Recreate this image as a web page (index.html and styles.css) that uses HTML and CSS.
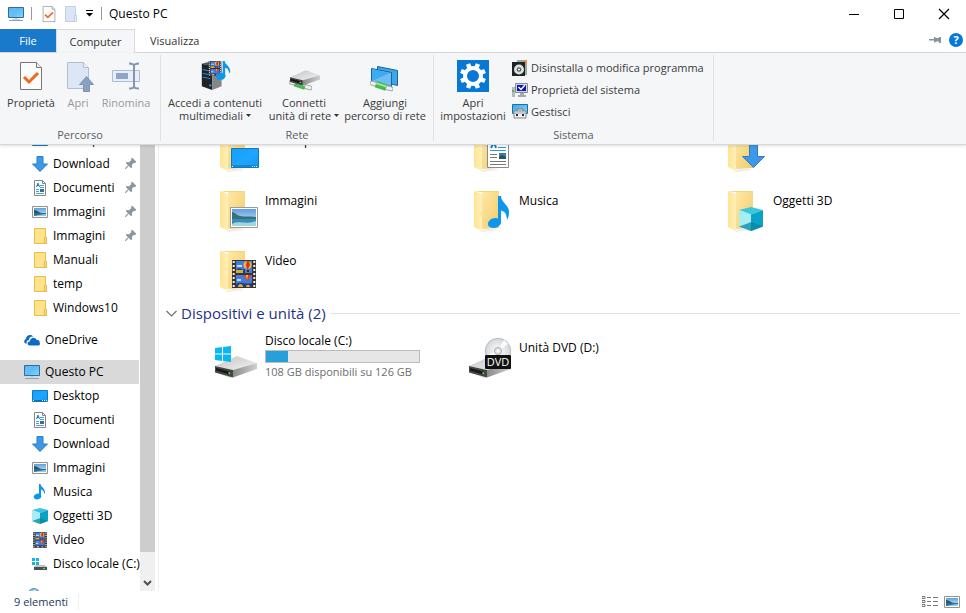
FILE: index.html
```html
<!DOCTYPE html>
<html lang="it">
<head>
<meta charset="utf-8">
<title>Questo PC</title>
<link rel="stylesheet" href="styles.css">
</head>
<body>
<svg class="defs" aria-hidden="true">
  <defs>
    <linearGradient id="gFolder" x1="0" x2="1" y1="0" y2="1"><stop offset="0" stop-color="#ffe9a8"/><stop offset="1" stop-color="#f0cb69"/></linearGradient>
    <linearGradient id="gFlap" x1="0" x2="1"><stop offset="0" stop-color="#ffe591"/><stop offset="1" stop-color="#ffefb9"/></linearGradient>
    <linearGradient id="gScreen" x1="0" x2="1" y1="0" y2="1"><stop offset="0" stop-color="#3aa9ee"/><stop offset="1" stop-color="#86d4fb"/></linearGradient>
    <linearGradient id="gDesk" x1="0" x2="1" y1="0" y2="1"><stop offset="0" stop-color="#12a0fb"/><stop offset=".55" stop-color="#1ea6ff"/><stop offset="1" stop-color="#0f97f2"/></linearGradient>
    <linearGradient id="gDrive" x1="0" x2="1" y1="0" y2="1"><stop offset="0" stop-color="#c4c4c4"/><stop offset="1" stop-color="#f2f2f2"/></linearGradient>
    <linearGradient id="gSide" x1="0" x2="1"><stop offset="0" stop-color="#8b8b8b"/><stop offset="1" stop-color="#d0d0d0"/></linearGradient>
    <linearGradient id="gSky" x1="0" x2="0" y1="0" y2="1"><stop offset="0" stop-color="#5d9ee0"/><stop offset="1" stop-color="#dcf0fa"/></linearGradient>
    <radialGradient id="gDisc"><stop offset="0" stop-color="#fff"/><stop offset="1" stop-color="#d3d6d8"/></radialGradient>

    <symbol id="pc" viewBox="0 0 16 16"><path d="M.5 1.500h15v10H.5z" fill="url(#gScreen)" stroke="#2b6e9e"/><path d="M1 11V2h8z" fill="#fff" opacity=".12"/><path d="M7 12h2v1H7z" fill="#b9c7d3"/><path d="M1 14h14v1H1z" fill="#8ca3b8"/><path d="M4 13h8v1H4z" fill="#d1dae3"/></symbol>
    <symbol id="desktop" viewBox="0 0 16 16"><path d="M.5 2.500h15v11H.5z" fill="url(#gDesk)" stroke="#1278c0"/><path d="M1 12h14v1H1z" fill="#0f6fb5"/><path d="M1 12h1v1H1zm9 0h1v1h-1zm2 0h1v1h-1zm2 0h1v1h-1z" fill="#fff"/></symbol>
    <symbol id="down" viewBox="0 0 16 16"><path d="M5 .5h6V8h4.500L8 15.500.5 8H5z" fill="#3d98e6" stroke="#2b7fc8"/></symbol>
    <symbol id="doc" viewBox="0 0 16 16"><path d="M2.500.5h8l3 3v12h-11z" fill="#fff" stroke="#858585"/><path d="M10.500.5v3h3" fill="none" stroke="#858585"/><path d="M8 5.500h4M8 7.500h4M4 9.500h3M4 11.500h3M4 13.500h8" stroke="#4ba3dd"/><path d="M4.500 7 6 3l1.500 4M5 5.500h2" stroke="#1d82cb" fill="none"/><path d="M8 9h4v3H8z" fill="#356d9c"/></symbol>
    <symbol id="photo" viewBox="0 0 16 16"><path d="M.5 2.500h15v11H.5z" fill="#fff" stroke="#929292"/><path d="M2 4h12v8H2z" fill="url(#gSky)"/><path d="M2 7c3 0 4 2 12 2v3H2z" fill="#2b6c96"/><path d="M2 6c2 0 4 1 6 3H2z" fill="#285b58"/><path d="M2 12c5-1 7-2 12-2v2z" fill="#91cbdd"/></symbol>
    <symbol id="fold" viewBox="0 0 16 16"><path d="M2.500.5h11v9h1v6h-12z" fill="#ffe38c" stroke="#e7bd49"/><path d="M12.500 15V9.500h2v6z" fill="#ffdf80" stroke="#e7bd49"/></symbol>
    <symbol id="cloud" viewBox="0 0 16 16"><path d="M1.500 11.500C-.5 11 0 7.500 2 7c0-4 5-5.500 7.500-2.500C6.500 4 5 6 5 8c-2 0-3 2-2 3.500z" fill="#0c6cc4"/><path d="M5.500 13.500C3 13.500 2.800 9.500 6 9.200c0-3.700 5.500-4.700 6.700-1 2.500-.5 3.300 1.500 2.800 2.300 1 1 .5 3-1 3z" fill="#0c6cc4"/></symbol>
    <symbol id="note" viewBox="0 0 16 16"><ellipse cx="5.500" cy="12.500" rx="3.800" ry="2.900" fill="#0d97ec" transform="rotate(-15 5.500 12.500)"/><path d="M7 0h1.600c.2 3.500 5.200 4 4.400 9.500h-1c0-3-1.800-3.500-3-4v7H7z" fill="#0d97ec"/></symbol>
    <symbol id="cube" viewBox="0 0 16 16"><path d="m8 0 8 2-8 3-8-3z" fill="#37c8df"/><path d="m0 2 8 3v11l-8-3z" fill="#8ee6ef"/><path d="m16 2-8 3v11l8-3z" fill="#0aa3c6"/><path d="m0 13 8-3 8 3-8 3z" fill="#07829e" opacity=".7"/><path d="m0 2 8 3v5l-8 3z" fill="#adf0f5" opacity=".75"/></symbol>
    <symbol id="film" viewBox="0 0 24 28" preserveAspectRatio="none"><path d="M0 0h24v28H0z" fill="#39342f"/><path d="M4 1h16v12H4zm0 14h16v12H4z" fill="#3f7ee0"/><path d="M4 10c5-4 5 1 9-1v4H4zm0 14c6-3 8 1 16-1v4H4z" fill="#203c82"/><path d="M5 5h5v2H5zm0 14h4v2H5z" fill="#bee0ff"/><ellipse cx="15.500" cy="5" rx="4" ry="4" fill="#f0b828"/><path d="M15 1h2l1 4-2 4h-1l-1-4z" fill="#de2d1b"/><path d="M15 10h2v2h-2z" fill="#3a2117"/><path d="M4 10h7v3H4z" fill="#e0ad28"/><path d="M12 15h7l-1 3-3 3-2-3z" fill="#e83b20"/><path d="M14 15h2l-1 5z" fill="#f7cf32"/><path d="M6 27c0-4 5-4 5 0zm8 0c0-3 4-3 4 0z" fill="#edab28"/><path d="M1.700 1v26M22.300 1v26" stroke="#eee" stroke-width="2" stroke-dasharray="2 2"/></symbol>
    <symbol id="video" viewBox="0 0 16 16"><use href="#film" x="1" y="0" width="14" height="16"/></symbol>
    <symbol id="winlogo" viewBox="0 0 16 16"><path d="m0 2 7-1v6.500H0zM8 .900 16 0v7.500H8zM0 8.500h7V15l-7-1zM8 8.500h8V16l-8-.900z" fill="#0ab7ef"/></symbol>
    <symbol id="cdisk" viewBox="0 0 16 16"><path d="M0 2h3v3H0zm4 0h3v3H4zM0 6h3v3H0zm4 0h3v3H4z" fill="#16b2e7"/><path d="M4 9h9l2 2v3H2v-3z" fill="#c4c4c4"/><path d="M2 11h13v3H2z" fill="#4b4f50"/><path d="M11 12h2v1h-2z" fill="#35e45c"/></symbol>
    <symbol id="globe" viewBox="0 0 16 16"><circle cx="10" cy="6.500" r="6" fill="#76b7d6" stroke="#5796b8"/><path d="M6 4c2-3 3 0 5-3l2 3-4 3z" fill="#c7e8e9"/></symbol>
    <symbol id="pin" viewBox="0 0 16 16"><g transform="rotate(45 8 8)" fill="#8796a3"><path d="M4 0h8v2l-1.500 1v4L13 9v2H3V9l2.500-2V3L4 2z"/><path d="M7.300 11h1.400v6H7.300z"/></g></symbol>
    <symbol id="folder" viewBox="0 0 48 48"><path d="M14 4h17v37l-17 1z" fill="url(#gFolder)"/><path d="m12 44 6-2h10l2 1-16 2z" fill="#ddd" opacity=".5"/><path d="m6 4 8 3v37l-8-4z" fill="url(#gFlap)"/><path d="M6 4h25v1H12z" fill="#f6d67b"/></symbol>
    <symbol id="drive" viewBox="0 0 42 22"><path d="m2 17 13 5 26-10-5-1z" fill="#999" opacity=".35"/><path d="M0 10 22 0l20 7-24 7z" fill="url(#gDrive)"/><path d="m0 10 18 4v7.500L0 16.500z" fill="#464646"/><path d="m1 12 15 4v3L1 14.500z" fill="#171917"/><path d="m18 14 24-7v6l-24 8.500z" fill="url(#gSide)"/><path d="m13.500 16 2 .500v2l-2-.500z" fill="#4de450"/></symbol>

    <symbol id="properties" viewBox="0 0 32 32"><path d="M5.500 2.500h16l5 5v22h-21z" fill="#fcfcfc" stroke="#777"/><path d="M21.500 2.500v5h5" fill="#eee" stroke="#777"/><path d="m9 17 5 5 9-9" fill="none" stroke="#f26722" stroke-width="3"/></symbol>
    <symbol id="open" viewBox="0 0 32 32"><path d="M5.500 2.500h16l5 5v21h-21z" fill="#dce6f5" stroke="#b0bdd2"/><path d="M21.500 2.500v5h5" fill="#edf2fa" stroke="#b0bdd2"/><path d="m24.500 16.500 7 8h-4v7h-6v-7h-4z" fill="#8ba0c0" stroke="#7f92b1"/></symbol>
    <symbol id="rename" viewBox="0 0 32 32"><path d="M2.500 10.500h27v11h-27z" fill="#e8eef8" stroke="#aebdd4"/><path d="M6 13h12v6H6z" fill="#8fa5c6"/><path d="M19 3.500c3 0 5 .500 5 2.500v20c0 2-2 2.500-5 2.500M29 3.500c-3 0-5 .500-5 2.500v20c0 2 2 2.500 5 2.500" fill="none" stroke="#8295b4" stroke-width="2"/></symbol>
    <symbol id="media" viewBox="0 0 34 32"><path d="m3 3 11 2v26L3 27z" fill="#202326"/><path d="m14 5 10 2v20l-10 4z" fill="#858787"/><path d="m3 3 7-2 14 3-10 2z" fill="#54585a"/><path d="m4 9 8 2M4 13l8 2M4 17l8 2" stroke="#2386cd" stroke-width="1.200"/><path d="M11 25h2v2h-2z" fill="#27afff"/><use href="#film" x="10" y="0" width="14" height="16"/><use href="#note" x="16" y="0" width="21" height="21"/></symbol>
    <symbol id="pipe" viewBox="0 0 24 12"><path d="m2 3 20 6" stroke="#aaa" stroke-width="5" stroke-linecap="round"/><path d="m2 3 20 6" stroke="#f1f1f1" stroke-width="3" stroke-linecap="round"/><path d="m6 4 11 3.500" stroke="#4cb653" stroke-width="7"/><path d="m6 3 11 3.500" stroke="#9ce69f" stroke-width="2"/></symbol>
    <symbol id="netdrive" viewBox="0 0 32 32"><use href="#pipe" x="1" y="19" width="23" height="12"/><use href="#drive" x="2" y="10" width="30" height="16"/></symbol>
    <symbol id="netplace" viewBox="0 0 32 32"><path d="m8.500 6.500 20 4v15l-20-5z" fill="#3da7ea" stroke="#1a659c"/><path d="m2.500 8.500 20 4v14l-20-5z" fill="#6dbdf4" stroke="#1a659c"/><path d="M3 9v12l18-8z" fill="#3eaaf1"/><use href="#pipe" x="1" y="20" width="23" height="12"/></symbol>
    <symbol id="settings" viewBox="0 0 32 32"><path d="M0 0h32v32H0z" fill="#0878d7"/><circle cx="16" cy="16" r="8" fill="none" stroke="#fff" stroke-width="4"/><g stroke="#fff" stroke-width="4.500"><path d="M16 3v5M16 24v5M3 16h5M24 16h5" transform="rotate(22.500 16 16)"/><path d="M16 3v5M16 24v5M3 16h5M24 16h5" transform="rotate(67.500 16 16)"/></g></symbol>
    <symbol id="uninstall" viewBox="0 0 16 16"><path d="M5 0h10v15H5z" fill="#91afa1"/><path d="m10 1 5-1v6z" fill="#e58c4d"/><path d="M0 2h13v14H0z" fill="#202326"/><circle cx="7" cy="9.500" r="5" fill="#dce0e1"/><circle cx="7" cy="9.500" r="2.300" fill="#545a5d"/><circle cx="7" cy="9.500" r="1" fill="#fff"/></symbol>
    <symbol id="sysprops" viewBox="0 0 16 16"><path d="M0 5h3v10H0z" fill="#b5bbbd"/><path d="M0 8h2v2H0z" fill="#52b456"/><path d="M3.500 1.500h12v9h-12z" fill="#d6d9df" stroke="#878b91"/><path d="M5 3h9v6H5z" fill="#0618b9"/><path d="m6.500 5 2.500 2.500L13 3" fill="none" stroke="#fff" stroke-width="1.500"/><path d="M8 11h4v2h2v2H6v-2h2z" fill="#a7abb1"/></symbol>
    <symbol id="manage" viewBox="0 0 16 16"><path d="M.5.500h15v9H.5z" fill="url(#gScreen)" stroke="#1e719e"/><path d="M5 5h6v3H5z" fill="#eee" stroke="#737a7d"/><path d="M2 7h12v7H2z" fill="#efefef" stroke="#7f8588"/><path d="M4 10h2v2H4zm6 0h2v2h-2z" fill="#24292b"/><path d="M2 9h12" stroke="#a3a7a9"/></symbol>
    <symbol id="caret" viewBox="0 0 5 3"><path d="M0 0h5L2.500 3z" fill="#333"/></symbol>
  </defs>
</svg>

<div class="window">
  <header class="titlebar">
    <svg class="i16"><use href="#pc"/></svg>
    <span class="bar"></span>
    <button class="quick" aria-label="Proprietà"><svg class="i18"><use href="#properties"/></svg></button>
    <button class="quick" aria-label="Nuova cartella"><svg class="i16" viewBox="0 0 16 16"><path d="M2.500.500h10v9h1v6h-11z" fill="#dbe5f5" stroke="#c2cfe5"/><path d="M11.500 15V9.500h2v6" fill="#e7edf8" stroke="#c2cfe5"/></svg></button>
    <button class="quick more" aria-label="Personalizza"><svg viewBox="0 0 7 7"><path d="M0 0h7v1H0zM0 3h7L3.500 6.500z"/></svg></button>
    <span class="bar near"></span>
    <h1>Questo PC</h1>
    <div class="wincontrols">
      <button aria-label="Riduci a icona"><svg viewBox="0 0 12 12"><path d="M1 6h10v1H1z"/></svg></button>
      <button aria-label="Ingrandisci"><svg viewBox="0 0 12 12"><path d="M1.500 1.500h9v9h-9z" fill="none" stroke="#000"/></svg></button>
      <button aria-label="Chiudi"><svg viewBox="0 0 12 12"><path d="m1 1 10 10M11 1 1 11" fill="none" stroke="#000" stroke-width="1.200"/></svg></button>
    </div>
  </header>

  <nav class="tabs">
    <button class="file">File</button>
    <button class="active">Computer</button>
    <button class="plain">Visualizza</button>
    <div class="tabtools">
      <button aria-label="Blocca barra multifunzione"><svg class="pinflat" viewBox="0 0 12 8"><path d="M0 3h5v1.500H0zM5 1h1l1 1h3V1h2v6h-2V5.500H7l-1 1H5z" fill="#899399"/></svg></button>
      <button class="help" aria-label="Guida">?</button>
    </div>
  </nav>

  <section class="ribbon">
    <div class="group">
      <div class="commands path">
        <button class="big"><svg><use href="#properties"/></svg>Proprietà</button>
        <button class="big off"><svg><use href="#open"/></svg>Apri</button>
        <button class="big off"><svg><use href="#rename"/></svg>Rinomina</button>
      </div>
      <h2>Percorso</h2>
    </div>
    <div class="group">
      <div class="commands net">
        <button class="big"><svg><use href="#media"/></svg>Accedi a contenuti<span>multimediali <svg class="caret"><use href="#caret"/></svg></span></button>
        <button class="big"><svg><use href="#netdrive"/></svg>Connetti<span>unità di rete <svg class="caret"><use href="#caret"/></svg></span></button>
        <button class="big"><svg><use href="#netplace"/></svg>Aggiungi<span>percorso di rete</span></button>
      </div>
      <h2>Rete</h2>
    </div>
    <div class="group">
      <div class="commands system">
        <button class="big"><svg><use href="#settings"/></svg>Apri<span>impostazioni</span></button>
        <div class="stack">
          <button><svg class="i16"><use href="#uninstall"/></svg>Disinstalla o modifica programma</button>
          <button><svg class="i16"><use href="#sysprops"/></svg>Proprietà del sistema</button>
          <button><svg class="i16"><use href="#manage"/></svg>Gestisci</button>
        </div>
      </div>
      <h2>Sistema</h2>
    </div>
  </section>

  <div class="body">
    <nav class="side">
      <div class="tree">
        <div class="branch">
          <a href="#"><svg class="i16"><use href="#desktop"/></svg>Desktop</a>
          <a href="#"><svg class="i16"><use href="#down"/></svg>Download<svg class="pin"><use href="#pin"/></svg></a>
          <a href="#"><svg class="i16"><use href="#doc"/></svg>Documenti<svg class="pin"><use href="#pin"/></svg></a>
          <a href="#"><svg class="i16"><use href="#photo"/></svg>Immagini<svg class="pin"><use href="#pin"/></svg></a>
          <a href="#"><svg class="i16"><use href="#fold"/></svg>Immagini<svg class="pin"><use href="#pin"/></svg></a>
          <a href="#"><svg class="i16"><use href="#fold"/></svg>Manuali</a>
          <a href="#"><svg class="i16"><use href="#fold"/></svg>temp</a>
          <a href="#"><svg class="i16"><use href="#fold"/></svg>Windows10</a>
        </div>
        <div class="branch">
          <a class="root" href="#"><svg class="i16"><use href="#cloud"/></svg>OneDrive</a>
        </div>
        <div class="branch">
          <a class="root selected" href="#"><svg class="i16"><use href="#pc"/></svg>Questo PC</a>
          <a href="#"><svg class="i16"><use href="#desktop"/></svg>Desktop</a>
          <a href="#"><svg class="i16"><use href="#doc"/></svg>Documenti</a>
          <a href="#"><svg class="i16"><use href="#down"/></svg>Download</a>
          <a href="#"><svg class="i16"><use href="#photo"/></svg>Immagini</a>
          <a href="#"><svg class="i16"><use href="#note"/></svg>Musica</a>
          <a href="#"><svg class="i16"><use href="#cube"/></svg>Oggetti 3D</a>
          <a href="#"><svg class="i16"><use href="#video"/></svg>Video</a>
          <a href="#"><svg class="i16"><use href="#cdisk"/></svg>Disco locale (C:)</a>
        </div>
        <div class="branch">
          <a class="root" href="#" aria-label="Rete"><svg class="i16"><use href="#globe"/></svg></a>
        </div>
      </div>
      <div class="scroll">
        <div class="thumb"></div>
        <button aria-label="Scorri in basso"><svg viewBox="0 0 9 6"><path d="m1 1 3.500 3.500L8 1" fill="none" stroke="#505050" stroke-width="2"/></svg></button>
      </div>
    </nav>

    <main>
      <div class="tiles">
        <a class="tile" href="#"><svg viewBox="0 0 48 48"><use href="#folder"/><path d="M17.500 21.500h27v19h-27z" fill="url(#gDesk)" stroke="#1278c0"/><path d="M18 38h26v2H18z" fill="#1588d5"/><path d="M18 39h1v1h-1zm20 0h1v1h-1zm2 0h1v1h-1zm2 0h1v1h-1z" fill="#fff"/></svg><span>Desktop</span></a>
        <a class="tile" href="#"><svg viewBox="0 0 48 48"><use href="#folder"/><path d="M19.500 13.500h21v27h-21z" fill="#fff" stroke="#8a8a8a"/><path d="m23 21 3-6 2 6" fill="none" stroke="#1680d0" stroke-width="2"/><path d="M30 17.500h8M30 20.500h8M22 23.500h16" stroke="#3394d6"/><path d="M22 27.500h7M22 30.500h7M22 34.500h16M22 37.500h16" stroke="#777"/><path d="M31 26h7v6h-7z" fill="#397da9"/><path d="m31 30 3-2 4 2v2h-7z" fill="#285660"/></svg><span>Documenti</span></a>
        <a class="tile" href="#"><svg viewBox="0 0 48 48"><use href="#folder"/><path d="M27.500 14.500h8v15h7L31.500 40.500 20.500 29.500h7z" fill="#3d98e6" stroke="#2b7fc8"/></svg><span>Download</span></a>
        <a class="tile" href="#"><svg viewBox="0 0 48 48"><use href="#folder"/><path d="M16.500 20.500h27v20h-27z" fill="#fff" stroke="#999"/><path d="M18 22h24v17H18z" fill="url(#gSky)"/><path d="M18 25c3 0 4 3 8 4 5 1 9 0 16 1v4H18z" fill="#387078"/><path d="M18 32h24v7H18z" fill="#368fbb"/><path d="M18 37c8-4 15 1 24-3v5H18z" fill="#a2d6df"/></svg><span>Immagini</span></a>
        <a class="tile" href="#"><svg viewBox="0 0 48 48"><use href="#folder"/><ellipse cx="26.500" cy="36" rx="6.800" ry="4.800" transform="rotate(-15 26.500 36)" fill="#0d97ec"/><path d="M30 9h3c0 7 9 9 8 17 0 3-1 5-2 7-.5-7-2.500-8.500-6-9.500V36h-3z" fill="#0d97ec"/></svg><span>Musica</span></a>
        <a class="tile" href="#"><svg viewBox="0 0 48 48"><use href="#folder"/><use href="#cube" x="17" y="20" width="24" height="24"/></svg><span>Oggetti 3D</span></a>
        <a class="tile" href="#"><svg viewBox="0 0 48 48"><use href="#folder"/><use href="#film" x="18" y="13" width="24" height="28"/></svg><span>Video</span></a>
      </div>
      <h2 class="section"><svg viewBox="0 0 11 7"><path d="m.500 1 5 5 5-5" fill="none" stroke="#6d6d6d" stroke-width="1.200"/></svg>Dispositivi e unità (2)</h2>
      <div class="tiles">
        <a class="tile" href="#"><svg viewBox="0 0 48 48"><use href="#drive" x="1" y="23" width="42" height="22"/><use href="#winlogo" x="1" y="13" width="16" height="16"/></svg>
          <span class="usage"><label for="usage">Disco locale (C:)</label><progress id="usage" max="126" value="18"></progress><small>108 GB disponibili su 126 GB</small></span></a>
        <a class="tile" href="#"><svg viewBox="0 0 48 48"><use href="#drive" x="1" y="23" width="42" height="22"/><circle cx="30" cy="18" r="12.700" fill="url(#gDisc)" stroke="#b9bcbe"/><path d="m30 18 6-11 4 4zM30 18l-9 8-2-4z" fill="#fff"/><circle cx="30" cy="18" r="3.500" fill="#e3e5e6" stroke="#aaa"/><circle cx="30" cy="18" r="1.300" fill="#fff"/><rect x="17" y="22" width="26" height="14" rx="1" fill="#111"/><text class="dvd" x="30" y="33" text-anchor="middle">DVD</text></svg><span class="dvdname">Unità DVD (D:)</span></a>
      </div>
    </main>
  </div>

  <footer>
    <span class="count">9 elementi</span>
    <div class="views">
      <button aria-label="Dettagli"><svg viewBox="0 0 16 12"><path d="M0 .500h3v2H0zm0 4h3v2H0zm0 4h3v2H0z" fill="none" stroke="#777"/><path d="M5 1.500h4M11 1.500h5M5 5.500h4M11 5.500h5M5 9.500h4M11 9.500h5" stroke="#777"/></svg></button>
      <button aria-label="Icone grandi"><svg viewBox="0 0 16 12"><use href="#photo" x="0" y="-2" width="16" height="16"/></svg></button>
    </div>
  </footer>
</div>
</body>
</html>
```
FILE: styles.css
```css
* { box-sizing: border-box; }
body {
  margin: 0;
  font: 12px/16px "Open Sans", "Noto Sans", sans-serif;
  color: #000;
  background: #fff;
}
button {
  padding: 0;
  border: 0;
  background: none;
  font: inherit;
  color: inherit;
}
a { color: inherit; text-decoration: none; }
h1, h2 { margin: 0; font: inherit; }
svg { display: block; flex: none; }
.defs { position: absolute; width: 0; height: 0; }
.i16 { width: 16px; height: 16px; }
.i18 { width: 18px; height: 18px; }

.window { display: flex; flex-direction: column; height: 100vh; }

.titlebar { display: flex; align-items: center; height: 29px; padding: 0 0 2px 8px; }
.bar { width: 1px; height: 13px; margin: 0 8px 0 7px; background: #999; }
.bar.near { margin: 0 7px 0 8px; }
.quick { margin-right: 5px; }
.quick.more { margin: 0 0 0 2px; }
.quick.more svg { width: 7px; height: 7px; }
.titlebar h1 { white-space: nowrap; }
.wincontrols { display: flex; margin-left: auto; }
.wincontrols button { display: grid; place-items: center; width: 45px; height: 26px; }
.wincontrols svg { width: 12px; height: 12px; }

.tabs { display: flex; height: 24px; border-bottom: 1px solid #dadbdc; color: #333; font-size: 11px; }
.tabs .file { width: 56px; height: 23px; background: #1979ca; color: #fff; }
.tabs .active {
  width: 79px;
  height: 24px;
  border: 1px solid #dadbdc;
  border-bottom: 0;
  background: #f5f6f7;
}
.tabs .plain { padding: 0 15px; }
.tabtools { display: flex; align-items: center; gap: 8px; margin-left: auto; padding: 0 3px 2px 0; }
.pinflat { width: 12px; height: 8px; }
.help {
  width: 14px;
  height: 14px;
  border-radius: 50%;
  background: #0878d7;
  color: #fff;
  font-weight: 700;
  line-height: 14px;
}

.ribbon {
  display: flex;
  position: relative;
  height: 92px;
  padding-top: 2px;
  border-bottom: 1px solid #d5d7d9;
  background: #f5f6f7;
  box-shadow: 0 1px 3px #0002;
  color: #3b3b3b;
  font-size: 11px;
}
.group {
  display: flex;
  flex-direction: column;
  height: 86px;
  border-right: 1px solid #e0e2e4;
}
.group h2 { margin-top: auto; margin-bottom: -2px; text-align: center; color: #5d5d5d; }
.commands { display: flex; align-items: flex-start; padding: 5px 9px 0 4px; }
.big { display: flex; flex-direction: column; align-items: center; line-height: 13px; white-space: nowrap; }
.big > svg { width: 32px; height: 32px; margin-bottom: 4px; }
.big span { display: flex; align-items: center; gap: 3px; }
.big.off { color: #999; }
.caret { width: 5px; height: 3px; }
.path { display: grid; grid-template-columns: 54px 40px 56px; padding-right: 6px; }
.net { display: grid; grid-template-columns: 100px 78px 84px; padding-right: 6px; }
.system .big { width: 70px; }
.stack { display: flex; flex-direction: column; padding-left: 4px; margin-top: -3px; }
.stack button { display: flex; align-items: center; gap: 3px; height: 22px; white-space: nowrap; }

.body { display: flex; flex: 1; min-height: 0; overflow: hidden; }
.side { display: flex; width: 159px; border-right: 1px solid #f0f0f0; overflow: hidden; }
.tree { display: flex; flex-direction: column; gap: 8px; width: 140px; margin-top: -17px; }
.tree a {
  display: flex;
  align-items: center;
  gap: 5px;
  height: 24px;
  margin-right: 1px;
  padding-left: 32px;
  white-space: nowrap;
}
.tree .root { padding-left: 24px; }
.tree .selected { background: #d9d9d9; }
.pin { width: 12px; height: 12px; margin: 0 3px 0 auto; }
.scroll { display: flex; flex-direction: column; width: 15px; background: #f0f0f0; }
.thumb { flex: 1; background: #cdcdcd; }
.scroll button { display: grid; place-items: end center; height: 39px; padding-bottom: 5px; }
.scroll svg { width: 9px; height: 6px; }

main { flex: 1; min-width: 0; padding-left: 55px; margin-top: -18px; }
.tiles { display: grid; grid-template-columns: repeat(auto-fill, 206px); gap: 12px 48px; }
.tile { display: flex; gap: 3px; height: 48px; white-space: nowrap; }
.tile > svg { width: 48px; height: 48px; }
.tile > span { padding-top: 6px; }
.section {
  display: flex;
  align-items: center;
  gap: 4px;
  height: 22px;
  margin: 7px 6px 9px -48px;
  font-size: 15px;
  color: #1e3287;
}
.section svg { width: 11px; height: 7px; }
.section::after { content: ""; flex: 1; height: 1px; background: #e2e2e2; }
.tile > .usage { display: flex; flex-direction: column; padding-top: 0; }
progress {
  width: 155px;
  height: 13px;
  margin: 1px 0;
  appearance: none;
  border: 1px solid #bcbcbc;
  background: #e6e6e6;
}
progress::-webkit-progress-bar { background: #e6e6e6; }
progress::-webkit-progress-value { background: #26a0da; }
small { font-size: 11px; color: #6d6d6d; }
.tile > .dvdname { padding-top: 7px; }
.dvd { font: 11px "Open Sans", sans-serif; fill: #fff; }

footer {
  display: flex;
  align-items: center;
  height: 22px;
  padding: 0 6px 0 14px;
  color: #1e395b;
  font-size: 11px;
}
.count { padding-right: 10px; border-right: 1px solid #eee; }
.views { display: flex; gap: 6px; margin-left: auto; }
.views svg { width: 16px; height: 12px; }
```
